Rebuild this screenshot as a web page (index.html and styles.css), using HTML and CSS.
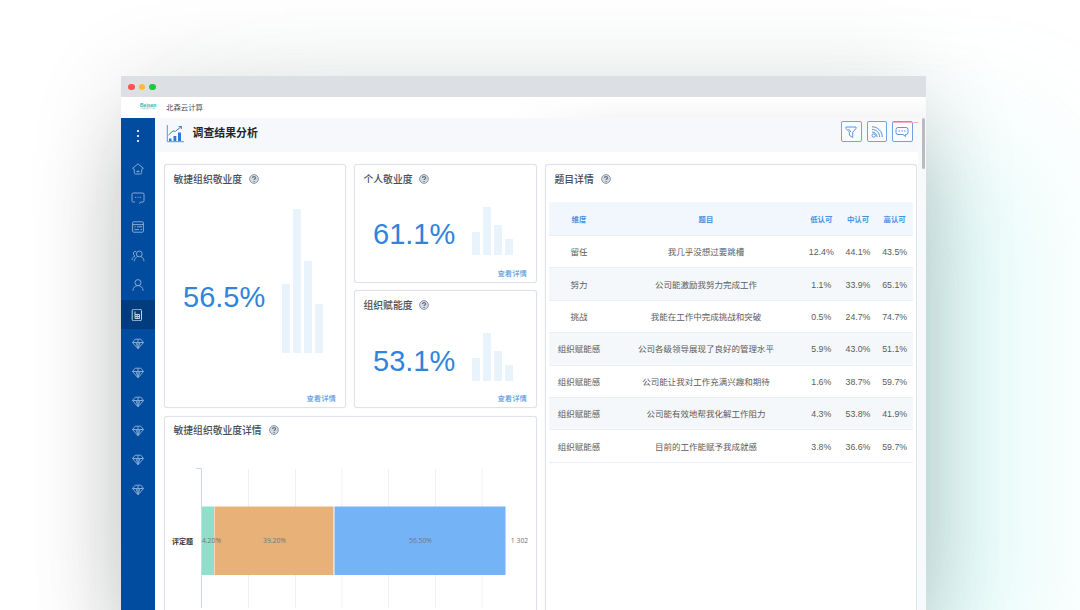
FILE: index.html
```html
<!DOCTYPE html>
<html lang="zh-CN">
<head>
	<meta charset="utf-8">
	<title>调查结果分析</title>
	<meta name="viewport" content="width=device-width, initial-scale=1">
	<link rel="stylesheet" href="styles.css">
</head>
<body>
	<svg class="sprite">
		<symbol id="help" viewBox="0 0 10 10">
			<circle cx="5" cy="5" r="4.400" fill="#d3d9e0" stroke="#8e99a7" stroke-width="1"/>
			<path d="M3.500 4.100c0-2.100 3.100-2 3.100-.2 0 1.100-1.500 1.100-1.500 2.100M5.100 7v1" fill="none" stroke="#66727f" stroke-width="1.200"/>
		</symbol>
		<symbol id="gem" viewBox="0 0 14 12">
			<path d="M4.200 1.200h5.600L12.500 4.500 7 10.800 1.500 4.500zM1.500 4.500h11M5 4.500l2 6 2-6M7 1.200v9"/>
		</symbol>
	</svg>
	<div class="window">
		<div class="titlebar">
			<i class="dot red"></i><i class="dot yellow"></i><i class="dot green"></i>
		</div>
		<div class="brand">
			<div class="logo">Beisen<small>北森云计算</small></div>
			<span>北森云计算</span>
		</div>
		<div class="body">
			<nav class="sidebar">
				<div class="more"><i></i><i></i><i></i></div>
				<a><svg viewBox="0 0 14 12"><path d="M7 .8L1.600 5.300l1.700 1V9.600q0 1.400 1.400 1.400h4.600q1.400 0 1.400-1.400V6.300l1.700-1zM5.300 8.700h3.400M7 7.300v1.400"/></svg></a>
				<a><svg viewBox="0 0 14 12"><path d="M4 10H2.200Q1 10 1 8.800V2.200Q1 1 2.200 1h9.600Q13 1 13 2.200v6.600Q13 10 11.800 10H10l-2 1.500M4 5.300h1.200M6.400 5.300h1.200M8.800 5.300H10"/></svg></a>
				<a><svg viewBox="0 0 14 12"><rect x="1.600" y=".8" width="10.800" height="10.400" rx="1"/><path d="M1.600 3.600h10.800M3.500 5.800h1.200M6 5.800h5M3.500 8.600h4.500M9.500 8.600H11"/></svg></a>
				<a><svg viewBox="0 0 14 12"><circle cx="8.300" cy="3.900" r="2.900"/><path d="M3.200 11.300c.3-2.700 1.800-4.100 3.300-4.700M10 6.600c1.600.7 2.800 2.200 3 4.700M5 1.500C2 .7 1.600 5 4 6.200 2.300 6.700 1.200 8 1 10"/></svg></a>
				<a><svg viewBox="0 0 14 12"><circle cx="7" cy="3.600" r="3"/><path d="M1.900 11.700c.2-3.200 2-5.100 5.100-5.100s4.900 1.900 5.100 5.100"/></svg></a>
				<a class="active"><svg viewBox="0 0 14 12"><rect x="1.200" y=".2" width="9.300" height="11.600" rx="1.500"/><path d="M4 2.500v7h4.500V5.500H4M6.200 5.500v4M4 7.500h4.500"/></svg></a>
				<a><svg><use href="#gem"/></svg></a>
				<a><svg><use href="#gem"/></svg></a>
				<a><svg><use href="#gem"/></svg></a>
				<a><svg><use href="#gem"/></svg></a>
				<a><svg><use href="#gem"/></svg></a>
				<a><svg><use href="#gem"/></svg></a>
			</nav>
			<main class="main">
				<header class="header">
					<svg class="header-icon" viewBox="0 0 18 18">
						<path d="M1.300 0v16.700H18" fill="none" stroke="#5d93d8" stroke-width="1"/>
						<path d="M3 16v-2.500h2.500V16zM7.500 16v-5h2.800v5zM12 16V7.500h3V16z" fill="#2d78d2"/>
						<path d="M2.500 10L7 6l2.500.3L15 1.800M12.600 1.600l2.900-.2-.3 2.800" fill="none" stroke="#3b82d6" stroke-width="1"/>
					</svg>
					<h1>调查结果分析</h1>
					<div class="tools">
						<button><svg viewBox="0 0 14 14"><path d="M2 2h10v1.500L8.700 7.200v5.300L5.400 10.300V7.200L2 3.500zM4.500 4L7 7"/></svg></button>
						<button><svg viewBox="0 0 14 14"><circle cx="3.700" cy="10.500" r="1.700"/><path d="M2 1.800c5.800 0 10.300 4.500 10.300 10.300M2 4.400c4.300 0 7.700 3.400 7.700 7.700M2 7c2.800 0 5.100 2.300 5.100 5.100"/></svg></button>
						<button class="alert"><svg viewBox="0 0 14 14"><path d="M3 2.500h8q2 0 2 2v3q0 2-2 2h-.5v2L8 9.500H3q-2 0-2-2v-3q0-2 2-2zM3.600 6h1.400M6.300 6h1.400M9 6h1.400"/></svg></button>
					</div>
				</header>
				<div class="cards">
					<section class="card tall">
						<h2>敏捷组织敬业度 <svg><use href="#help"/></svg></h2>
						<div class="stat">
							<b>56.5%</b>
							<div class="bars"><i style="height:69px"></i><i style="height:144px"></i><i style="height:92px"></i><i style="height:49px"></i></div>
						</div>
						<a class="detail">查看详情</a>
					</section>
					<section class="card personal">
						<h2>个人敬业度 <svg><use href="#help"/></svg></h2>
						<div class="stat">
							<b>61.1%</b>
							<div class="bars"><i style="height:23px"></i><i style="height:48px"></i><i style="height:30px"></i><i style="height:16px"></i></div>
						</div>
						<a class="detail">查看详情</a>
					</section>
					<section class="card empower">
						<h2>组织赋能度 <svg><use href="#help"/></svg></h2>
						<div class="stat">
							<b>53.1%</b>
							<div class="bars"><i style="height:23px"></i><i style="height:48px"></i><i style="height:30px"></i><i style="height:16px"></i></div>
						</div>
						<a class="detail">查看详情</a>
					</section>
					<section class="card chart">
						<h2>敏捷组织敬业度详情 <svg><use href="#help"/></svg></h2>
						<svg class="plot" viewBox="0 0 371 164">
							<path class="grid" d="M83.500 25v139M130.500 25v139M177 25v139M223.500 25v139M270.500 25v139M317 25v139"/>
							<path class="axis" d="M31 24.500h5.500V164"/>
							<rect x="37" y="62.500" width="12" height="68.500" fill="#8fe0cb"/>
							<rect x="49.500" y="62.500" width="119" height="68.500" fill="#e8b178"/>
							<rect x="169.500" y="62.500" width="171" height="68.500" fill="#74b4f6"/>
							<text class="name" x="7" y="99.500">评定题</text>
							<text x="46.500" y="99">4.20%</text>
							<text x="109.500" y="99">39.20%</text>
							<text x="255.500" y="99">56.50%</text>
							<text x="354.500" y="99">1 302</text>
						</svg>
					</section>
					<section class="card questions">
						<h2>题目详情 <svg><use href="#help"/></svg></h2>
						<table>
							<thead>
								<tr><th class="dim">维度</th><th>题目</th><th class="num">低认可</th><th class="num">中认可</th><th class="num">高认可</th></tr>
							</thead>
							<tbody>
								<tr><td>留任</td><td>我几乎没想过要跳槽</td><td>12.4%</td><td>44.1%</td><td>43.5%</td></tr>
								<tr><td>努力</td><td>公司能激励我努力完成工作</td><td>1.1%</td><td>33.9%</td><td>65.1%</td></tr>
								<tr><td>挑战</td><td>我能在工作中完成挑战和突破</td><td>0.5%</td><td>24.7%</td><td>74.7%</td></tr>
								<tr><td>组织赋能感</td><td>公司各级领导展现了良好的管理水平</td><td>5.9%</td><td>43.0%</td><td>51.1%</td></tr>
								<tr><td>组织赋能感</td><td>公司能让我对工作充满兴趣和期待</td><td>1.6%</td><td>38.7%</td><td>59.7%</td></tr>
								<tr><td>组织赋能感</td><td>公司能有效地帮我化解工作阻力</td><td>4.3%</td><td>53.8%</td><td>41.9%</td></tr>
								<tr><td>组织赋能感</td><td>目前的工作能赋予我成就感</td><td>3.8%</td><td>36.6%</td><td>59.7%</td></tr>
							</tbody>
						</table>
					</section>
				</div>
			</main>
			<div class="scroll"><i></i></div>
		</div>
	</div>
</body>
</html>
```

FILE: styles.css
```css
* {
	box-sizing: border-box;
}
body {
	margin: 0;
	height: 610px;
	padding: 76px 0 0 121px;
	overflow: hidden;
	background: #fff;
	font-family: "Liberation Sans", "Noto Sans CJK SC", sans-serif;
	color: #4a4f57;
}
.sprite {
	display: none;
}
.window {
	width: 805px;
	height: 534px;
	background: #fff;
	box-shadow: 0 10px 90px rgba(0, 0, 0, 0.14), -5px 80px 80px rgba(0, 0, 0, 0.13), 105px 70px 120px rgba(140, 240, 230, 0.25);
}
.titlebar {
	height: 21px;
	display: flex;
	align-items: center;
	gap: 4px;
	padding: 1px 0 0 7px;
	background: #dce0e5;
}
.dot {
	width: 6.500px;
	height: 6.500px;
	border-radius: 50%;
}
.red {
	background: #fc5550;
}
.yellow {
	background: #fdbc2c;
}
.green {
	background: #20c93a;
}
.brand {
	height: 21px;
	display: flex;
	align-items: center;
	gap: 9px;
	padding: 0 0 2px 19px;
	font-size: 7.400px;
	background: linear-gradient(to right, #fff 48%, rgba(255, 255, 255, 0) 62%), linear-gradient(#fff, #f6f6f6);
}
.logo {
	width: 17px;
	font-size: 5px;
	line-height: 4px;
	font-weight: bold;
	color: #2bb5b8;
}
.logo small {
	display: block;
	font-size: 3px;
	line-height: 3px;
	font-weight: normal;
	color: #8cc;
}
.body {
	height: 492px;
	display: flex;
}
.sidebar {
	width: 33.500px;
	background: #014c9e;
}
.more {
	height: 36px;
	display: flex;
	flex-direction: column;
	align-items: center;
	justify-content: center;
	gap: 2.500px;
}
.more i {
	width: 2.500px;
	height: 2.500px;
	background: #d5e2f1;
}
.sidebar a {
	height: 29.200px;
	display: flex;
	align-items: center;
	justify-content: center;
}
.sidebar a.active {
	background: #013d7e;
}
.sidebar svg {
	width: 14px;
	height: 12px;
	fill: none;
	stroke: #82a9d6;
	stroke-width: 1;
}
.sidebar .active svg {
	stroke: #c3d4e8;
}
.main {
	width: 763px;
}
.header {
	height: 34px;
	display: flex;
	align-items: center;
	padding: 0 5px 5px 11px;
	background: #f7f8fc;
}
.header-icon {
	width: 18px;
	height: 18px;
	margin-top: 3px;
}
h1 {
	flex: 1;
	margin: -1px 0 0 9px;
	font-size: 10.900px;
	color: #22262c;
}
.tools {
	display: flex;
	gap: 5px;
	margin-top: -2px;
}
.tools button {
	position: relative;
	width: 20.500px;
	height: 20.500px;
	display: flex;
	align-items: center;
	justify-content: center;
	padding: 0;
	border: 1px solid #6ea4e2;
	border-radius: 2px;
	background: #fafcff;
}
.tools svg {
	width: 14px;
	height: 14px;
	fill: none;
	stroke: #5b96dc;
	stroke-width: 1;
}
.alert:after {
	content: "";
	position: absolute;
	top: 0;
	left: 0;
	width: 25px;
	height: 1px;
	background: #f3b3ba;
}
.cards {
	display: grid;
	grid-template-columns: 182px 183px 372px;
	grid-template-rows: 119px 118px 195px;
	grid-template-areas: "tall personal questions" "tall empower questions" "chart chart questions";
	gap: 7.500px 8px;
	padding: 11.500px 0 0 9.500px;
}
.card {
	display: flex;
	flex-direction: column;
	border: 1px solid #dde2ec;
	border-radius: 3px;
	background: #fff;
	box-shadow: 0 0 1px #dde2ec;
}
.tall {
	grid-area: tall;
}
.personal {
	grid-area: personal;
}
.empower {
	grid-area: empower;
}
.chart {
	grid-area: chart;
}
.questions {
	grid-area: questions;
}
/* these two run on below the fold */
.chart, .questions {
	border-bottom: 0;
	border-radius: 3px 3px 0 0;
}
h2 {
	display: flex;
	align-items: center;
	gap: 7px;
	height: 14px;
	margin: 7.500px 0 0 8.500px;
	font-size: 9.800px;
	font-weight: 500;
	color: #474d57;
}
.chart h2, .empower h2 {
	margin-top: 6.500px;
}
h2 svg {
	width: 10px;
	height: 10px;
}
.stat {
	flex: 1;
	display: flex;
	align-items: center;
	gap: 17px;
	padding: 16px 0 0 18px;
}
.stat b {
	font-size: 29px;
	font-weight: normal;
	color: #2f84dc;
}
.bars {
	display: flex;
	align-items: flex-end;
	gap: 3px;
}
.bars i {
	width: 8px;
	background: #e9f3fc;
}
.tall .bars {
	margin-bottom: 34px;
}
.personal .bars, .empower .bars {
	margin-bottom: 8px;
}
.empower .stat {
	padding-top: 18px;
}
.detail {
	align-self: flex-end;
	margin: 0 9px 3px 0;
	font-size: 7.400px;
	line-height: 11px;
	color: #4a90d9;
}
.plot {
	width: 371px;
	height: 164px;
	margin-top: 7px;
	font-family: "Open Sans", "Noto Sans CJK SC", sans-serif;
	font-size: 6.800px;
	text-anchor: middle;
	fill: #747474;
}
.grid {
	fill: none;
	stroke: #edf1f6;
}
.axis {
	fill: none;
	stroke: #ccd7e3;
}
.plot .name {
	font-size: 7px;
	font-weight: bold;
	text-anchor: start;
	fill: #2d3138;
}
table {
	width: 364px;
	margin: 16px 0 0 3px;
	border-collapse: separate;
	border-spacing: 0;
	table-layout: fixed;
	text-align: center;
	font-size: 8.500px;
	color: #5c5c5c;
}
th, td {
	height: 32.400px;
	padding: 1px 0 0;
	border-bottom: 1px solid #e9eff4;
	line-height: 12px;
}
td:nth-child(n+3) {
	font-size: 8.800px;
}
th {
	height: 34px;
	padding-top: 2px;
	background: #f2f7fd;
	font-size: 7.400px;
	color: #4a90dc;
}
tbody tr:nth-child(even) {
	background: #f4f8fa;
}
.dim {
	width: 60px;
}
.num {
	width: 36.700px;
}
.scroll {
	flex: 1;
	display: flex;
	justify-content: flex-end;
	padding-right: 1px;
	background: #f8f9fa;
}
.scroll i {
	width: 3.500px;
	height: 51px;
	border-radius: 2px;
	background: #b9bbbe;
}
```
